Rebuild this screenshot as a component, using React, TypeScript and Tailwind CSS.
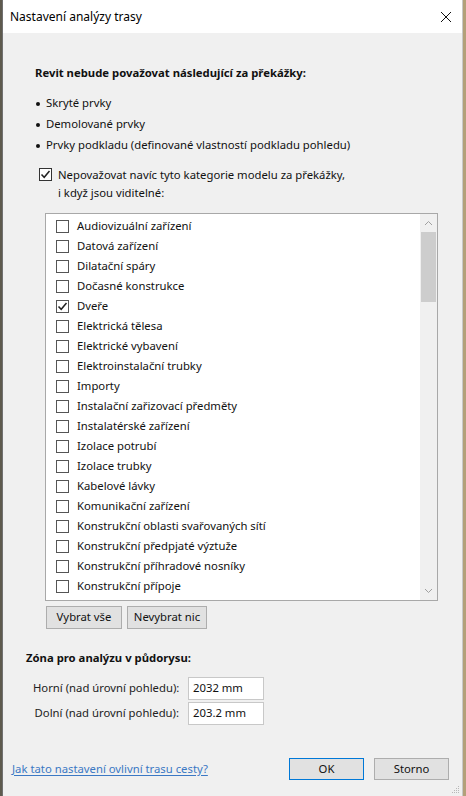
const items: { label: string; checked?: boolean }[] = [
  { label: "Audiovizuální zařízení" },
  { label: "Datová zařízení" },
  { label: "Dilatační spáry" },
  { label: "Dočasné konstrukce" },
  { label: "Dveře", checked: true },
  { label: "Elektrická tělesa" },
  { label: "Elektrické vybavení" },
  { label: "Elektroinstalační trubky" },
  { label: "Importy" },
  { label: "Instalační zařizovací předměty" },
  { label: "Instalatérské zařízení" },
  { label: "Izolace potrubí" },
  { label: "Izolace trubky" },
  { label: "Kabelové lávky" },
  { label: "Komunikační zařízení" },
  { label: "Konstrukční oblasti svařovaných sítí" },
  { label: "Konstrukční předpjaté výztuže" },
  { label: "Konstrukční příhradové nosníky" },
  { label: "Konstrukční přípoje" },
  { label: "" },
];

const bullets = [
  "Skryté prvky",
  "Demolované prvky",
  "Prvky podkladu (definované vlastností podkladu pohledu)",
];

function CheckBox({ checked, border = "border-[#333]" }: { checked?: boolean; border?: string }) {
  return (
    <span className={`w-[13px] h-[13px] border ${border} bg-white flex items-center justify-center shrink-0`}>
      {checked && (
        <svg width="11" height="11" viewBox="0 0 11 11">
          <path d="M1.5 5.5 L4.2 8.3 L9.5 2" fill="none" stroke="#222" strokeWidth="1.5" />
        </svg>
      )}
    </span>
  );
}

function Button({ children, primary, className = "" }: { children: React.ReactNode; primary?: boolean; className?: string }) {
  return (
    <div
      className={`flex items-center justify-center whitespace-nowrap bg-[#e1e1e1] border ${
        primary ? "border-[#0078d7]" : "border-[#adadad]"
      } ${className}`}
    >
      {children}
    </div>
  );
}

export default function App() {
  return (
    <div
      className="w-[466px] h-[796px] flex bg-[#b3a079] overflow-hidden text-[11.3px] text-[#111]"
      style={{ fontFamily: '"Noto Sans", "Open Sans", sans-serif' }}
    >
      <div className="w-[2px] bg-[#5e5a4e]" />
      <div className="w-[461px] flex flex-col border-l border-[#707070] border-r border-r-[#c8c8c8]">
        {/* title bar */}
        <div className="h-[33px] bg-white flex items-center justify-between pl-[7px] pr-[10px]">
          <span className="text-[12px] text-black">Nastavení analýzy trasy</span>
          <svg width="12" height="12" viewBox="0 0 12 12">
            <path d="M1 1 L11 11 M11 1 L1 11" stroke="#111" strokeWidth="1" />
          </svg>
        </div>

        <div className="flex-1 bg-[#f0f0f0] flex flex-col relative">
          <div className="pl-[32px] pt-[31px] font-bold leading-[18px]">
            Revit nebude považovat následující za překážky:
          </div>

          <div className="pl-[32px] pt-[11px] flex flex-col">
            {bullets.map((b) => (
              <div key={b} className="h-[21px] flex items-center">
                <span className="w-[4px] h-[4px] rounded-full bg-[#111] mr-[6px] ml-[1px]" />
                <span>{b}</span>
              </div>
            ))}
          </div>

          <div className="pl-[36px] pt-[10px] flex items-start gap-[6px]">
            <div className="pt-[2px]">
              <CheckBox checked />
            </div>
            <div className="leading-[18px]">
              <div>Nepovažovat navíc tyto kategorie modelu za překážky,</div>
              <div>i když jsou viditelné:</div>
            </div>
          </div>

          {/* list */}
          <div className="ml-[42px] mt-[11px] w-[393px] h-[388px] border border-[#a8a8a8] bg-white flex">
            <div className="flex-1 overflow-hidden pt-[2px] pl-[10px]">
              {items.map((it, i) => (
                <div key={i} className="h-[20px] flex items-center gap-[8px] whitespace-nowrap">
                  <CheckBox checked={it.checked} border="border-[#555]" />
                  {it.label && <span>{it.label}</span>}
                </div>
              ))}
            </div>
            <div className="w-[17px] bg-[#f0f0f0] flex flex-col items-center">
              <div className="h-[18px] flex items-center justify-center">
                <svg width="9" height="6" viewBox="0 0 9 6">
                  <path d="M1 5 L4.5 1.5 L8 5" fill="none" stroke="#a0a0a0" strokeWidth="1" />
                </svg>
              </div>
              <div className="w-[15px] h-[70px] bg-[#cdcdcd]" />
              <div className="flex-1" />
              <div className="h-[18px] flex items-center justify-center">
                <svg width="9" height="6" viewBox="0 0 9 6">
                  <path d="M1 1 L4.5 4.5 L8 1" fill="none" stroke="#a0a0a0" strokeWidth="1" />
                </svg>
              </div>
            </div>
          </div>

          <div className="ml-[43px] mt-[5px] flex gap-[5px]">
            <Button className="w-[76px] h-[23px]">Vybrat vše</Button>
            <Button className="w-[80px] h-[23px]">Nevybrat nic</Button>
          </div>

          <div className="pl-[23px] pt-[20px] font-bold leading-[18px]">Zóna pro analýzu v půdorysu:</div>

          <div className="pl-[30px] pt-[10px] flex flex-col gap-[2px]">
            {[
              ["Horní (nad úrovní pohledu):", "2032 mm"],
              ["Dolní (nad úrovní pohledu):", "203.2 mm"],
            ].map(([l, v]) => (
              <div key={l} className="flex items-center h-[23px]">
                <span className="w-[146px] text-right text-[#222] whitespace-nowrap">{l}</span>
                <div className="ml-[9px] w-[76px] h-[23px] bg-white border border-[#c8c8c8] flex items-center pl-[4px]">
                  {v}
                </div>
              </div>
            ))}
          </div>

          <div className="flex-1" />

          <div className="flex items-center pb-[16px] pl-[9px]">
            <span className="text-[#3b78c4] underline underline-offset-2">Jak tato nastavení ovlivní trasu cesty?</span>
            <div className="flex-1" />
            <Button primary className="w-[75px] h-[22px]">OK</Button>
            <Button className="w-[75px] h-[22px] ml-[10px] mr-[13px]">Storno</Button>
          </div>

          <svg className="absolute right-[2px] bottom-[2px]" width="10" height="10" viewBox="0 0 10 10">
            <g fill="#b8b8b8">
              <rect x="8" y="2" width="1" height="1" />
              <rect x="6" y="4" width="1" height="1" />
              <rect x="8" y="4" width="1" height="1" />
              <rect x="4" y="6" width="1" height="1" />
              <rect x="6" y="6" width="1" height="1" />
              <rect x="8" y="6" width="1" height="1" />
              <rect x="2" y="8" width="1" height="1" />
              <rect x="4" y="8" width="1" height="1" />
              <rect x="6" y="8" width="1" height="1" />
              <rect x="8" y="8" width="1" height="1" />
            </g>
          </svg>
        </div>
      </div>
    </div>
  );
}
